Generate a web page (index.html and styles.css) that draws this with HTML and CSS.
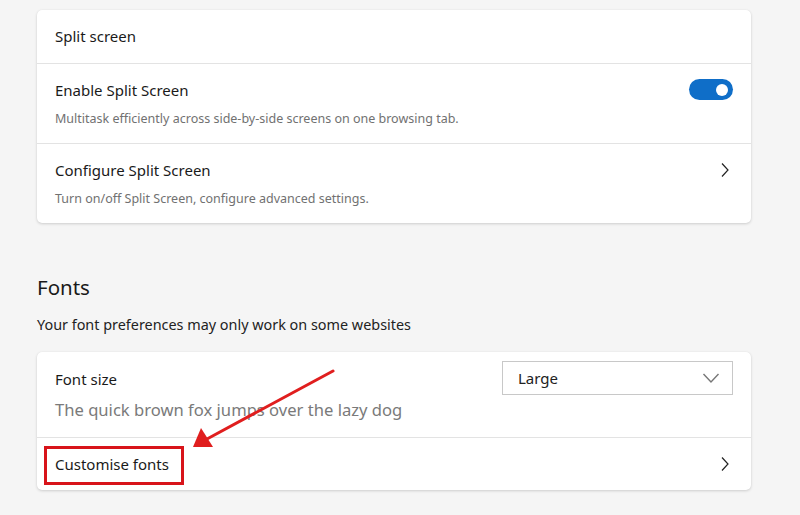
FILE: index.html
```html
<!DOCTYPE html>
<html lang="en">
<head>
<meta charset="utf-8">
<title>Settings</title>
<link rel="stylesheet" href="styles.css">
</head>
<body>
<main class="page">
  <section class="card">
    <div class="row row-title">Split screen</div>
    <div class="row">
      <div class="row-text">
        <div class="label">Enable Split Screen</div>
        <div class="desc">Multitask efficiently across side-by-side screens on one browsing tab.</div>
      </div>
      <div class="toggle"><span class="knob"></span></div>
    </div>
    <div class="row">
      <div class="row-text">
        <div class="label">Configure Split Screen</div>
        <div class="desc">Turn on/off Split Screen, configure advanced settings.</div>
      </div>
      <svg class="chev" width="10" height="16" viewBox="0 0 10 16"><path d="M2 1.5 L8 8 L2 14.5" fill="none" stroke="#222" stroke-width="1.2"/></svg>
    </div>
  </section>

  <h2 class="section-title">Fonts</h2>
  <p class="section-sub">Your font preferences may only work on some websites</p>

  <section class="card card-fonts">
    <div class="row row-fontsize">
      <div class="row-text">
        <div class="label">Font size</div>
        <div class="sample">The quick brown fox jumps over the lazy dog</div>
      </div>
      <div class="select">
        <span>Large</span>
        <svg width="18" height="12" viewBox="0 0 18 12"><path d="M1.5 2 L9 10 L16.5 2" fill="none" stroke="#777" stroke-width="1.4"/></svg>
      </div>
    </div>
    <div class="row row-custom">
      <div class="label">Customise fonts</div>
      <svg class="chev" width="10" height="16" viewBox="0 0 10 16"><path d="M2 1.5 L8 8 L2 14.5" fill="none" stroke="#222" stroke-width="1.2"/></svg>
      <span class="highlight"></span>
    </div>
    <svg class="arrow" width="150" height="90" viewBox="0 0 150 90">
      <line x1="144" y1="4" x2="18" y2="72" stroke="#e01e1e" stroke-width="3" stroke-linecap="round"/>
      <polygon points="4,80 12,61 24,80" fill="#e01e1e"/>
    </svg>
  </section>
</main>
</body>
</html>
```

FILE: styles.css
```css
* { box-sizing: border-box; }
html, body { margin: 0; padding: 0; }
body {
  background: #f5f5f5;
  font-family: "Noto Sans", "Segoe UI", sans-serif;
  color: #1a1a1a;
  width: 800px;
  height: 515px;
  overflow: hidden;
}
.page {
  padding: 10px 49px 0 37px;
}
.card {
  background: #fff;
  border-radius: 5px;
  box-shadow: 0 1px 3px rgba(0,0,0,0.16), 0 0 1px rgba(0,0,0,0.08);
}
.row {
  display: flex;
  align-items: center;
  justify-content: space-between;
  padding: 0 18px;
  border-top: 1px solid #e3e3e3;
}
.row:first-child { border-top: none; }
.row-title {
  height: 53px;
  font-size: 15px;
  padding-bottom: 1px;
}
.row:not(.row-title) { height: 80px; }
.label { font-size: 15px; line-height: 20px; }
.desc {
  font-size: 12.5px;
  color: #717171;
  line-height: 18px;
  margin-top: 10px;
}
.toggle {
  width: 44px;
  height: 21px;
  border-radius: 11px;
  background: #0f6ec8;
  position: relative;
  margin-top: -28px;
  margin-right: 0;
}
.knob {
  position: absolute;
  width: 12px;
  height: 12px;
  border-radius: 50%;
  background: #fff;
  right: 5px;
  top: 4.5px;
}
.chev { margin-right: 3px; margin-top: -28px; }

.section-title {
  font-size: 20.5px;
  font-weight: 400;
  margin: 50px 0 0 0;
  line-height: 28px;
}
.section-sub {
  font-size: 14.4px;
  margin: 14px 0 0 0;
  line-height: 20px;
  color: #222;
}
.card-fonts {
  margin-top: 17px;
  position: relative;
}
.row.row-fontsize {
  height: 85px;
  align-items: flex-start;
  padding-top: 17px;
}
.sample {
  font-size: 16.6px;
  color: #7a7a7a;
  margin-top: 9px;
  line-height: 24px;
}
.select {
  width: 231px;
  height: 34px;
  border: 1px solid #c8c8c8;
  margin-top: -8px;
  display: flex;
  align-items: center;
  justify-content: space-between;
  padding: 0 12px 0 15px;
  font-size: 15px;
  color: #222;
}
.row.row-custom {
  height: 53px;
  position: relative;
}
.row-custom .chev { margin-top: 0; }
.highlight {
  position: absolute;
  left: 7px;
  top: 8px;
  width: 140px;
  height: 39px;
  border: 3px solid #d8141a;
}
.arrow {
  position: absolute;
  left: 152px;
  top: 15px;
}
```
